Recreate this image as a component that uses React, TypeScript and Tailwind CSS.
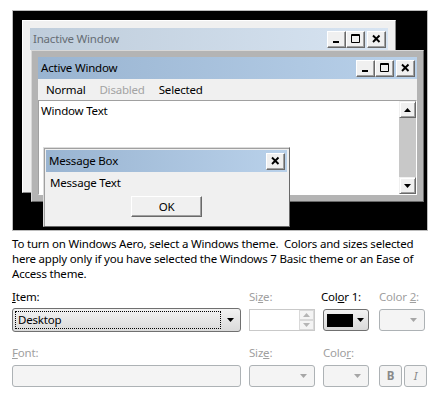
import type { ReactNode } from 'react'

type CapKind = 'min' | 'max' | 'close'

function CaptionButton({ kind, className = '' }: { kind: CapKind; className?: string }) {
  return (
    <div
      className={`flex h-[17px] w-[19px] items-center justify-center border border-t-white border-l-white border-r-[#696969] border-b-[#696969] bg-[#f0f0f0] shadow-[inset_-1px_-1px_0_#a0a0a0] ${className}`}
    >
      <svg width="11" height="10" viewBox="0 0 11 10">
        {kind === 'min' && <rect x="2" y="7" width="6" height="2" fill="#000" />}
        {kind === 'max' && (
          <path d="M1.5 0.5h8v8h-8z M1.5 1.5h8" stroke="#000" fill="none" />
        )}
        {kind === 'close' && (
          <path d="M2 1.5l6.5 6.5M8.5 1.5l-6.5 6.5" stroke="#000" strokeWidth="1.9" />
        )}
      </svg>
    </div>
  )
}

function Caption({
  title,
  active,
  kinds,
}: {
  title: string
  active: boolean
  kinds: CapKind[]
}) {
  return (
    <div
      className={`flex h-[22px] shrink-0 items-center pr-[2px] pl-[3px] ${
        active
          ? 'bg-gradient-to-r from-[#99b4d1] to-[#b9d1ea] text-black'
          : 'bg-gradient-to-r from-[#bfcddb] to-[#d7e4f2] text-[#666d74]'
      }`}
    >
      <span className="flex-1 text-[11.5px] leading-none">{title}</span>
      {kinds.map((k) => (
        <CaptionButton key={k} kind={k} className={k === 'close' ? 'ml-[2px]' : ''} />
      ))}
    </div>
  )
}

function Tri({ dir, color = '#000' }: { dir: 'up' | 'down'; color?: string }) {
  return (
    <svg width="7" height="4" viewBox="0 0 7 4">
      <path d={dir === 'up' ? 'M0 4h7L3.5 0z' : 'M0 0h7L3.5 4z'} fill={color} />
    </svg>
  )
}

function ScrollArrow({ dir }: { dir: 'up' | 'down' }) {
  return (
    <div className="flex h-[17px] w-[17px] shrink-0 items-center justify-center border border-t-[#f0f0f0] border-l-[#f0f0f0] border-r-[#696969] border-b-[#696969] bg-[#f0f0f0] shadow-[inset_1px_1px_0_#fff,inset_-1px_-1px_0_#a0a0a0]">
      <Tri dir={dir} />
    </div>
  )
}

function Preview() {
  return (
    <div className="relative ml-[12px] mt-[10px] h-[221px] w-[416px] overflow-hidden border border-[#bcbcbc] bg-black">
      {/* inactive window */}
      <div className="absolute left-[9px] top-[9px] flex h-[173px] w-[374px] flex-col border border-t-white border-l-white border-r-[#8a8a8a] border-b-[#8a8a8a] bg-[#f0f0f0] p-[7px]">
        <Caption title="Inactive Window" active={false} kinds={['min', 'max', 'close']} />
      </div>

      {/* active window */}
      <div className="absolute left-[18px] top-[39px] flex h-[152px] w-[393px] flex-col border border-t-[#d8d8d8] border-l-[#d8d8d8] border-r-[#696969] border-b-[#696969] bg-[#b4b4b4] p-[6px]">
        <div className="flex flex-1 flex-col bg-[#f0f0f0]">
          <Caption title="Active Window" active kinds={['min', 'max', 'close']} />
          <div className="flex h-[21px] shrink-0 items-center gap-[14px] pl-[8px] text-[11.5px] leading-none">
            <span className="text-black">Normal</span>
            <span className="text-[#a3a3a3]">Disabled</span>
            <span className="text-black">Selected</span>
          </div>
          <div className="flex flex-1 border border-t-[#a0a0a0] border-l-[#a0a0a0] border-r-white border-b-white bg-white">
            <div className="flex-1 pl-[2px] pt-[2px] text-[11.5px] leading-[15px] text-black">
              Window Text
            </div>
            <div className="flex w-[17px] flex-col justify-between bg-[#c8c8c8]">
              <ScrollArrow dir="up" />
              <ScrollArrow dir="down" />
            </div>
          </div>
        </div>
      </div>

      {/* message box */}
      <div className="absolute left-[30px] top-[136px] flex h-[80px] w-[247px] flex-col border border-t-[#dcdcdc] border-l-[#dcdcdc] border-r-[#696969] border-b-[#696969] bg-[#f0f0f0] px-[2px] pt-[2px] shadow-[inset_1px_1px_0_#a0a0a0]">
        <div className="flex h-[22px] shrink-0 items-center bg-gradient-to-r from-[#99b4d1] to-[#b9d1ea] pl-[3px] pr-[2px]">
          <span className="flex-1 text-[11.5px] leading-none text-black">Message Box</span>
          <CaptionButton kind="close" />
        </div>
        <div className="pl-[4px] pt-[3px] text-[11.5px] leading-[15px] text-black">Message Text</div>
        <div className="mt-[6px] flex justify-center">
          <div className="flex h-[21px] w-[71px] items-center justify-center border border-t-white border-l-white border-r-[#696969] border-b-[#696969] bg-[#f0f0f0] text-[11.5px] leading-none text-black shadow-[inset_-1px_-1px_0_#a0a0a0]">
            OK
          </div>
        </div>
      </div>
    </div>
  )
}

function Label({ children, disabled, className = '' }: { children: ReactNode; disabled?: boolean; className?: string }) {
  return (
    <div className={`h-[14px] text-[11.5px] leading-[14px] ${disabled ? 'text-[#a0a0a0]' : 'text-black'} ${className}`}>
      {children}
    </div>
  )
}

function DisabledBox({ className = '', children }: { className?: string; children?: ReactNode }) {
  return (
    <div
      className={`flex h-[22px] items-center rounded-[3px] border border-[#adb2b5] bg-[#f4f4f4] ${className}`}
    >
      {children}
    </div>
  )
}

export default function App() {
  return (
    <div className="h-[409px] w-[441px] overflow-hidden bg-white font-['Noto_Sans',sans-serif] tracking-[-0.2px]">
      <Preview />

      <p className="mt-[5px] px-[12px] text-[11.5px] leading-[15px] text-black">
        To turn on Windows Aero, select a Windows theme.&nbsp; Colors and sizes selected here
        apply only if you have selected the Windows 7 Basic theme or an Ease of Access theme.
      </p>

      {/* row 1 */}
      <div className="mt-[9px] flex pl-[12px]">
        <div className="w-[237px]">
          <Label>
            <span className="underline">I</span>tem:
          </Label>
          <div className="mt-[4px] flex h-[24px] w-[229px] items-center rounded-[3px] border border-[#707070] bg-gradient-to-b from-[#f2f2f2] to-[#dadada]">
            <div className="ml-[2px] flex h-[18px] w-[206px] items-center border border-dotted border-black pl-[2px] text-[11.5px] leading-none text-black">
              Desktop
            </div>
            <div className="flex flex-1 justify-center">
              <Tri dir="down" />
            </div>
          </div>
        </div>
        <div className="w-[72px]">
          <Label disabled>
            Si<span className="underline">z</span>e:
          </Label>
          <div className="mt-[5px] flex h-[22px] w-[66px] border border-[#c9c9c9] bg-white">
            <div className="flex-1" />
            <div className="flex w-[15px] flex-col">
              <div className="flex flex-1 items-center justify-center border border-[#d9d9d9] bg-[#f4f4f4]">
                <Tri dir="up" color="#b5b5b5" />
              </div>
              <div className="flex flex-1 items-center justify-center border border-[#d9d9d9] bg-[#f4f4f4]">
                <Tri dir="down" color="#b5b5b5" />
              </div>
            </div>
          </div>
        </div>
        <div className="w-[58px]">
          <Label>
            Col<span className="underline">o</span>r 1:
          </Label>
          <div className="ml-[2px] mt-[5px] flex h-[22px] w-[46px] items-center rounded-[3px] border border-[#707070] bg-gradient-to-b from-[#f2f2f2] to-[#dadada] pl-[3px]">
            <div className="h-[13px] w-[26px] bg-black" />
            <div className="flex flex-1 justify-center">
              <Tri dir="down" />
            </div>
          </div>
        </div>
        <div className="w-[46px]">
          <Label disabled>
            Color <span className="underline">2</span>:
          </Label>
          <DisabledBox className="mt-[5px] w-[46px] justify-end pr-[7px]">
            <Tri dir="down" color="#a6a6a6" />
          </DisabledBox>
        </div>
      </div>

      {/* row 2 */}
      <div className="mt-[14px] flex pl-[12px]">
        <div className="w-[237px]">
          <Label disabled>
            <span className="underline">F</span>ont:
          </Label>
          <DisabledBox className="mt-[5px] w-[229px]" />
        </div>
        <div className="w-[74px]">
          <Label disabled>
            Siz<span className="underline">e</span>:
          </Label>
          <DisabledBox className="mt-[5px] w-[66px] justify-end pr-[7px]">
            <Tri dir="down" color="#a6a6a6" />
          </DisabledBox>
        </div>
        <div className="w-[56px]">
          <Label disabled>
            Colo<span className="underline">r</span>:
          </Label>
          <DisabledBox className="mt-[5px] w-[46px] justify-end pr-[7px]">
            <Tri dir="down" color="#a6a6a6" />
          </DisabledBox>
        </div>
        <div className="flex gap-[2px] pt-[19px]">
          <DisabledBox className="w-[23px] justify-center text-[11.5px] font-bold text-[#8a8a8a]">B</DisabledBox>
          <DisabledBox className="w-[23px] justify-center text-[11.5px] italic text-[#8a8a8a]">I</DisabledBox>
        </div>
      </div>
    </div>
  )
}
